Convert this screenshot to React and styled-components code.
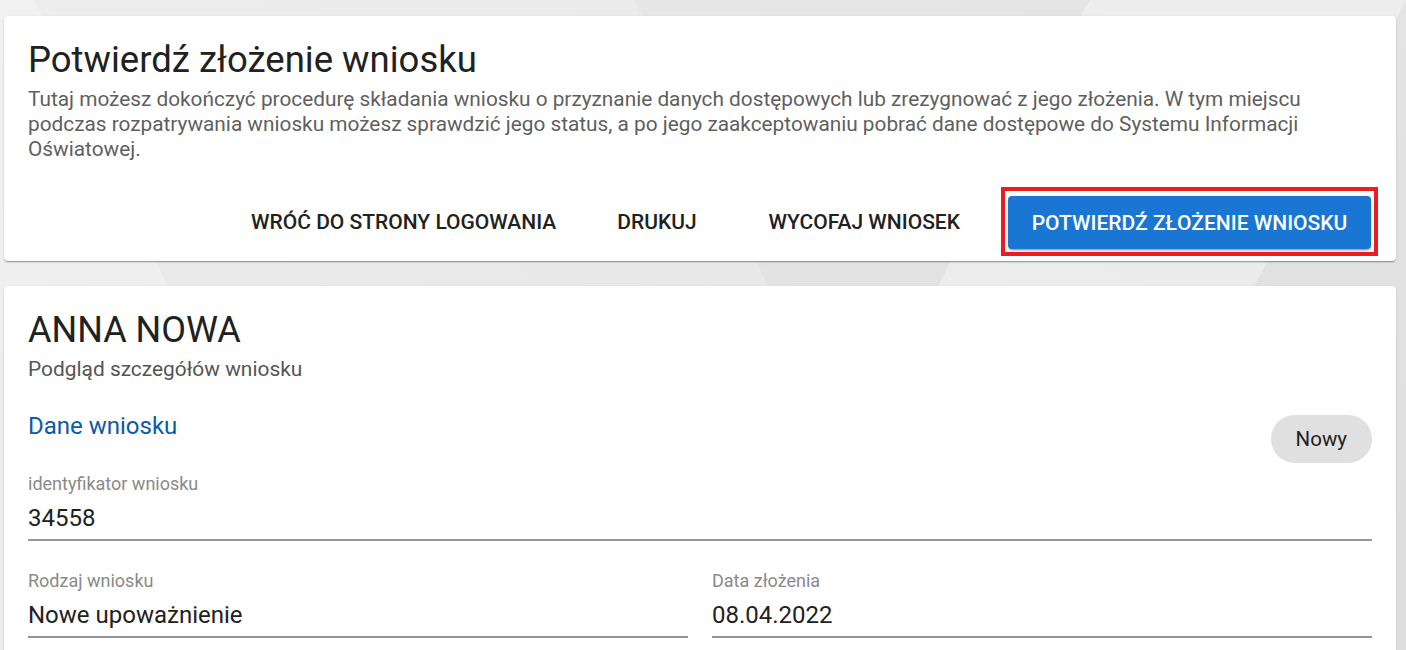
import styled, { createGlobalStyle } from "styled-components";

const GlobalStyle = createGlobalStyle`
  html, body {
    margin: 0;
    padding: 0;
  }
  body {
    font-family: Roboto, "Noto Sans", sans-serif;
    background-color: #e6e6e6;
    background-image:
      linear-gradient(118deg, transparent 62%, rgba(255,255,255,0.35) 62%, rgba(255,255,255,0.35) 80%, transparent 80%),
      linear-gradient(65deg, rgba(255,255,255,0.25) 20%, transparent 20%, transparent 55%, rgba(0,0,0,0.02) 55%),
      linear-gradient(160deg, #ededed 0%, #e2e2e2 100%);
    min-height: 650px;
    overflow: hidden;
  }
`;

const Page = styled.div`
  display: flex;
  flex-direction: column;
  gap: 25px;
  padding: 16px 10px 0 4px;
`;

const Card = styled.section`
  background: #fff;
  border-radius: 4px;
  box-shadow: 0 2px 1px -1px rgba(0, 0, 0, 0.2), 0 1px 1px 0 rgba(0, 0, 0, 0.14),
    0 1px 3px 0 rgba(0, 0, 0, 0.12);
  padding: ${(p) => p.$padding};
`;

const Title = styled.h1`
  margin: 0;
  font-size: 36.5px;
  font-weight: 400;
  line-height: 40px;
  color: #212121;
`;

const Description = styled.p`
  margin: 7px 0 0;
  padding-right: 6px;
  font-size: 20.8px;
  line-height: 25px;
  color: #5f5f5f;
  font-weight: 400;
`;

const Actions = styled.div`
  display: flex;
  justify-content: flex-end;
  align-items: center;
  margin-top: 25px;
`;

const TextButton = styled.button`
  border: 0;
  background: none;
  font-family: inherit;
  font-size: 21px;
  font-weight: 500;
  text-transform: uppercase;
  color: #212121;
  height: 44px;
  padding: 0 ${(p) => p.$pr ?? 30}px 0 ${(p) => p.$pl ?? 30}px;
  cursor: pointer;
`;

const Highlight = styled.div`
  margin-left: 11px;
  border: 4px solid #ed1c24;
  padding: 5px 3px 3px;
`;

const PrimaryButton = styled.button`
  border: 0;
  border-radius: 4px;
  background: #1976d2;
  color: #fff;
  font-family: inherit;
  font-size: 21px;
  font-weight: 500;
  text-transform: uppercase;
  height: 53px;
  width: 363px;
  box-shadow: 0 3px 1px -2px rgba(0, 0, 0, 0.2), 0 2px 2px 0 rgba(0, 0, 0, 0.14),
    0 1px 5px 0 rgba(0, 0, 0, 0.12);
  cursor: pointer;
`;

const Name = styled.h2`
  margin: 0;
  font-size: 36px;
  font-weight: 400;
  line-height: 40px;
  color: #212121;
`;

const Subtitle = styled.div`
  margin-top: 5px;
  font-size: 20.9px;
  line-height: 28px;
  color: #555;
`;

const SectionHead = styled.div`
  display: flex;
  justify-content: space-between;
  align-items: flex-start;
  margin-top: 28px;
`;

const SectionTitle = styled.h3`
  margin: 0;
  font-size: 24px;
  font-weight: 400;
  line-height: 30px;
  color: #0d5aa7;
`;

const Chip = styled.span`
  display: inline-flex;
  align-items: center;
  justify-content: center;
  height: 48px;
  padding: 0 25px;
  margin-top: 4px;
  border-radius: 24px;
  background: #e0e0e0;
  color: #212121;
  font-size: 20.5px;
`;

const Grid = styled.div`
  display: grid;
  grid-template-columns: 1fr 1fr;
  column-gap: 24px;
  row-gap: 29px;
  margin-top: 10px;
`;

const Field = styled.div`
  grid-column: ${(p) => (p.$full ? "1 / -1" : "auto")};
  border-bottom: 2px solid #949494;
  padding-bottom: 6px;
`;

const Label = styled.div`
  font-size: 18px;
  line-height: 22px;
  color: #8a8a8a;
`;

const Value = styled.div`
  margin-top: 8px;
  font-size: 24px;
  line-height: 30px;
  color: #212121;
`;

const fields = [
  { label: "identyfikator wniosku", value: "34558", full: true },
  { label: "Rodzaj wniosku", value: "Nowe upoważnienie" },
  { label: "Data złożenia", value: "08.04.2022" },
];

export default function App() {
  return (
    <>
      <GlobalStyle />
      <Page>
        <Card $padding="24px 18px 5px 24px">
          <Title>Potwierdź złożenie wniosku</Title>
          <Description>
            Tutaj możesz dokończyć procedurę składania wniosku o przyznanie
            danych dostępowych lub zrezygnować z jego złożenia. W tym miejscu
            podczas rozpatrywania wniosku możesz sprawdzić jego status, a po
            jego zaakceptowaniu pobrać dane dostępowe do Systemu Informacji
            Oświatowej.
          </Description>
          <Actions>
            <TextButton>Wróć do strony logowania</TextButton>
            <TextButton $pl={31} $pr={42}>
              Drukuj
            </TextButton>
            <TextButton>Wycofaj wniosek</TextButton>
            <Highlight>
              <PrimaryButton>Potwierdź złożenie wniosku</PrimaryButton>
            </Highlight>
          </Actions>
        </Card>
        <Card $padding="24px 24px 24px 24px">
          <Name>ANNA NOWA</Name>
          <Subtitle>Podgląd szczegółów wniosku</Subtitle>
          <SectionHead>
            <SectionTitle>Dane wniosku</SectionTitle>
            <Chip>Nowy</Chip>
          </SectionHead>
          <Grid>
            {fields.map((f) => (
              <Field key={f.label} $full={f.full}>
                <Label>{f.label}</Label>
                <Value>{f.value}</Value>
              </Field>
            ))}
          </Grid>
        </Card>
      </Page>
    </>
  );
}
